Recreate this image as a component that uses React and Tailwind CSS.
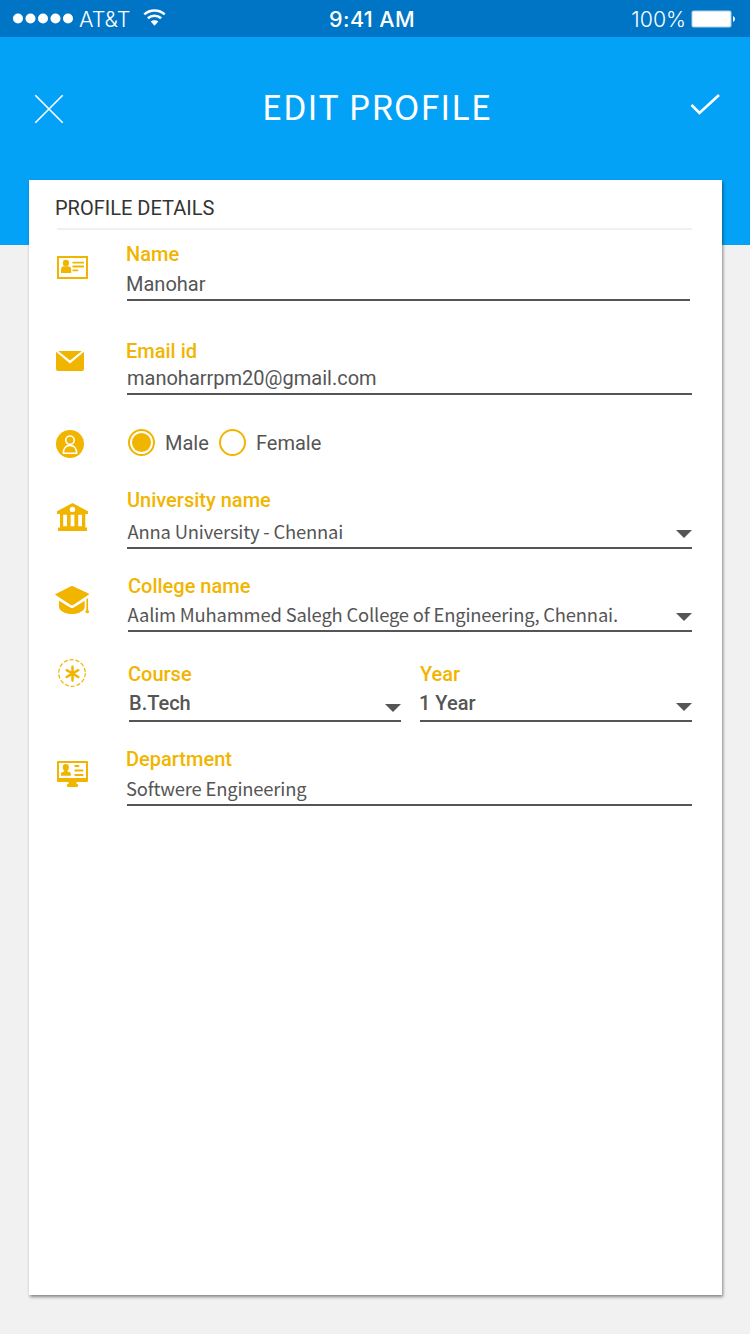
import React from "react";

const GOLD = "#f1b500";
const INK = "#555555";

function IdCardIcon() {
  return (
    <svg className="block" width="31" height="23" viewBox="0 0 31 23" fill={GOLD}>
      <rect x="1" y="1" width="29" height="21" fill="none" stroke={GOLD} strokeWidth="2" />
      <ellipse cx="8.900" cy="6.900" rx="3.100" ry="3.200" />
      <path d="M4 17v-3.400c0-2 1.200-3.300 3-3.300h3.900c1.800 0 3.300 1.300 3.300 3.300V17z" />
      <path d="M15.500 5.700H27v1.900H15.500zM15.500 9.600H27v1.900H15.500zM15.500 13.400h5.700v1.900h-5.700z" />
    </svg>
  );
}

function MailIcon() {
  return (
    <svg className="block" width="28" height="20" viewBox="0 0 28 20" fill={GOLD}>
      <path d="M2.200 0h23.600L14 9.600z" />
      <path d="M0 .8l14 11.600L28 .8V18a2 2 0 0 1-2 2H2a2 2 0 0 1-2-2z" />
    </svg>
  );
}

function PersonIcon() {
  return (
    <svg className="block" width="28" height="28" viewBox="0 0 28 28" fill="none">
      <circle cx="14" cy="14" r="14" fill={GOLD} />
      <g stroke="#fff" strokeWidth="1.600">
        <circle cx="14" cy="10.200" r="4.200" />
        <path d="M7.300 23.300c0-5 2.800-7.900 6.700-7.900s6.700 2.900 6.700 7.900z" strokeLinejoin="round" />
      </g>
    </svg>
  );
}

function BankIcon() {
  return (
    <svg className="block" width="31" height="28" viewBox="0 0 31 28" fill={GOLD}>
      <path
        fillRule="evenodd"
        d="M15.500 0L31 8.300V11h-2.700v13.500H30V28H1v-3.500h2V11H0V8.300zM15.500 3.700a2.700 2.700 0 1 0 0 5.400 2.700 2.700 0 0 0 0-5.400zM6.200 11.700v11.500H10V11.700zM13.600 11.700v11.500h3.800V11.700zM21.200 11.700v11.500H25V11.700z"
      />
    </svg>
  );
}

function GradCapIcon() {
  return (
    <svg className="block" width="35" height="28" viewBox="0 0 35 28" fill={GOLD}>
      <path d="M16 .2q1-.4 2 0l15.600 7.300q1 .6 0 1.200L18.200 19q-1.200.7-2.400 0L.6 9.100q-1-.7 0-1.200z" />
      <path d="M4 14.700l11.600 7q1.400.8 2.800 0l11.300-7v6.500C29 25 23.500 28 17 28S4.600 25 4 21.200z" />
      <path d="M31.400 13l1.700-.8v12.100c1.500.6 1.400 2.900-.8 2.900s-2.300-2.300-.9-2.900z" />
    </svg>
  );
}

function AsteriskIcon() {
  return (
    <svg className="block" width="28" height="28" viewBox="0 0 28 28" fill="none" stroke={GOLD}>
      <circle cx="14" cy="14" r="13.300" strokeWidth="1.200" strokeDasharray="4.200 1.770" />
      <path d="M14.500 7.800v13.600M8.700 11.200l11.600 6.800M20.300 11.200L8.700 18" strokeWidth="2.500" strokeLinecap="round" />
    </svg>
  );
}

function MonitorIcon() {
  return (
    <svg className="block" width="31" height="26" viewBox="0 0 31 26" fill={GOLD}>
      <path
        fillRule="evenodd"
        d="M1 0h29q1 0 1 1v19q0 1-1 1H19.500v1.500q0 .5.500.5 1.200.2 1.200 1.500T20 26h-9q-1.200 0-1.200-1.500T11 23q.5 0 .5-.5V21H1q-1 0-1-1V1q0-1 1-1zM2 2v15h27V2z"
      />
      <ellipse cx="8.800" cy="6.500" rx="3.100" ry="3.400" />
      <path d="M7.200 8.500h3.200v2l2 .6q1.500.5 1.500 1.900v1.700h-10V13q0-1.400 1.500-1.900l1.800-.6z" />
      <path d="M17.500 4.100h4.700V6h-4.700zM17.500 8.600h8.800v1.900h-8.800zM17.500 13h8.800v1.900h-8.800z" />
    </svg>
  );
}

function Arrow({ className }) {
  return (
    <svg className={"block " + className} width="16" height="8" viewBox="0 0 16 8" fill={INK}>
      <path d="M0 0h16L8 8z" />
    </svg>
  );
}

function Row({ className, iconClass, icon, children }) {
  return (
    <div className={"flex items-start " + className}>
      <div className={"w-[98px] shrink-0 " + iconClass}>{icon}</div>
      {children}
    </div>
  );
}

function Label({ className = "", children }) {
  return <div className={"h-6 whitespace-nowrap text-[20px] leading-6 font-medium text-[#f1b500] " + className}>{children}</div>;
}

const humanist = "font-['Noto_Sans_CJK_SC',sans-serif] text-[18.4px] tracking-[-0.18px] whitespace-nowrap ";

export default function App() {
  return (
    <div className="h-[1334px] w-[750px] overflow-hidden bg-[#f1f1f1] font-['Roboto',sans-serif] text-[#555555]">
      <div className="grid h-[37px] grid-cols-3 items-center bg-[#0075c5] font-['Inter',sans-serif] text-[21px] leading-[37px] text-white">
        <div className="flex items-center pl-[13px]">
          <svg className="mt-[-2px] block" width="61" height="11" viewBox="0 0 61 11" fill="#fff">
            <circle cx="5" cy="5.500" r="5" />
            <circle cx="17.500" cy="5.500" r="5" />
            <circle cx="30" cy="5.500" r="5" />
            <circle cx="42.500" cy="5.500" r="5" />
            <circle cx="55" cy="5.500" r="5" />
          </svg>
          <span className="mt-px ml-[5px] w-[52px] text-[21.5px] font-light">AT&amp;T</span>
          <svg className="mt-[-3px] ml-[12px] block" width="23" height="17" viewBox="0 0 23 17" fill="none">
            <path d="M1.300 5.400c5.600-5.200 14.800-5.200 20.400 0M4.900 9.300c3.700-3.400 9.500-3.400 13.200 0" stroke="#fff" strokeWidth="2.600" />
            <path d="M7.700 12.600c2.200-1.900 5.400-1.900 7.600 0L11.500 16.700z" fill="#fff" />
          </svg>
        </div>
        <div className="mt-px -ml-[6px] text-center text-[21.5px] font-medium tracking-[0.4px]">9:41 AM</div>
        <div className="flex items-center justify-end pr-[15px]">
          <span className="mt-px text-[21.3px] font-light">100%</span>
          <svg className="mt-[-1px] ml-[5px] block" width="44" height="18" viewBox="0 0 44 18" fill="#fff">
            <rect x=".5" y=".5" width="40" height="17" rx="2" fillOpacity=".65" />
            <rect x="1.500" y="1.500" width="38" height="15" rx="1" />
            <path d="M42 6q2 1 2 3t-2 3z" />
          </svg>
        </div>
      </div>

      <div className="flex h-[208px] items-start justify-between bg-[#04a2f6] pr-[30px] pl-[34px] text-white">
        <svg className="mt-[57px] block" width="30" height="30" viewBox="0 0 30 30" fill="none" stroke="#fff" strokeWidth="1.600">
          <path d="M1.300 1.300l27.400 27.400M28.700 1.300L1.300 28.700" />
        </svg>
        <h1 className="mt-[45px] font-['Noto_Sans_CJK_SC',sans-serif] text-[34px] leading-[48px] tracking-[1.1px]">EDIT PROFILE</h1>
        <svg className="mt-[56px] block" width="30" height="23" viewBox="0 0 30 23" fill="none" stroke="#fff" strokeWidth="2.600">
          <path d="M1.500 12l8 8L29 2" />
        </svg>
      </div>

      <div className="relative mt-[-65px] ml-[29px] h-[1115px] w-[693px] bg-white shadow-[1px_2px_3px_rgba(0,0,0,0.45)]">
        <h2 className="pt-4 pl-[26px] text-[20px] leading-6 text-[#333333]">PROFILE DETAILS</h2>
        <div className="mt-2 ml-7 h-[2px] w-[635px] bg-[#f0f0f0]" />

        <Row className="mt-3" iconClass="pt-[14px] pl-7" icon={<IdCardIcon />}>
          <div className="h-[59px] w-[563px] border-b-2 border-[#555555]">
            <Label className="-ml-px">Name</Label>
            <div className="mt-[6px] -ml-px text-[20px] leading-6">Manohar</div>
          </div>
        </Row>

        <Row className="mt-[38px]" iconClass="pt-3 pl-[27px]" icon={<MailIcon />}>
          <div className="h-[56px] w-[565px] border-b-2 border-[#555555]">
            <Label className="-ml-px">Email id</Label>
            <div className="mt-[3px] text-[20px] leading-6">manoharrpm20@gmail.com</div>
          </div>
        </Row>

        <Row className="mt-[34px]" iconClass="pt-px pl-[27px]" icon={<PersonIcon />}>
          <div className="flex h-[27px] items-center text-[20px] leading-6">
            <span className="ml-px flex size-[27px] items-center justify-center rounded-full border-2 border-[#f1b500]">
              <span className="size-[19px] rounded-full bg-[#f1b500]" />
            </span>
            <span className="ml-[10px] w-[54px]">Male</span>
            <span className="size-[27px] rounded-full border-2 border-[#f1b500]" />
            <span className="ml-[10px]">Female</span>
          </div>
        </Row>

        <Row className="mt-[30px]" iconClass="pt-[15px] pl-7" icon={<BankIcon />}>
          <div className="h-[61px] w-[565px] border-b-2 border-[#555555]">
            <Label>University name</Label>
            <div className="mt-[7px] flex items-start justify-between">
              <span className={humanist + "ml-[0.5px] leading-6"}>Anna University - Chennai</span>
              <Arrow className="mt-[11px]" />
            </div>
          </div>
        </Row>

        <Row className="mt-[25px]" iconClass="pt-3 pl-[26px]" icon={<GradCapIcon />}>
          <div className="ml-px h-[58px] w-[564px] border-b-2 border-[#555555]">
            <Label>College name</Label>
            <div className="mt-[4px] flex items-start justify-between">
              <span className={humanist + "-ml-[0.5px] leading-6"}>Aalim Muhammed Salegh College of Engineering, Chennai.</span>
              <Arrow className="mt-[11px]" />
            </div>
          </div>
        </Row>

        <Row className="mt-[27px]" iconClass="pl-[29px]" icon={<AsteriskIcon />}>
          <div className="ml-[2px] grid grid-cols-[272px_272px] gap-[19px] pt-[3px] font-medium">
            <div className="h-[60px] border-b-2 border-[#555555]">
              <Label className="-ml-px">Course</Label>
              <div className="mt-[5px] flex items-start justify-between text-[20px] leading-6">
                <span>B.Tech</span>
                <Arrow className="mt-[13px]" />
              </div>
            </div>
            <div className="h-[60px] border-b-2 border-[#555555]">
              <Label>Year</Label>
              <div className="mt-[5px] flex items-start justify-between text-[20px] leading-6">
                <span className="-ml-px">1 Year</span>
                <Arrow className="mt-3" />
              </div>
            </div>
          </div>
        </Row>

        <Row className="mt-[25px]" iconClass="pt-[14px] pl-7" icon={<MonitorIcon />}>
          <div className="h-[59px] w-[565px] border-b-2 border-[#555555]">
            <Label className="-ml-px">Department</Label>
            <div className={humanist + "mt-[5px] -ml-px leading-6"}>Softwere Engineering</div>
          </div>
        </Row>
      </div>
    </div>
  );
}
